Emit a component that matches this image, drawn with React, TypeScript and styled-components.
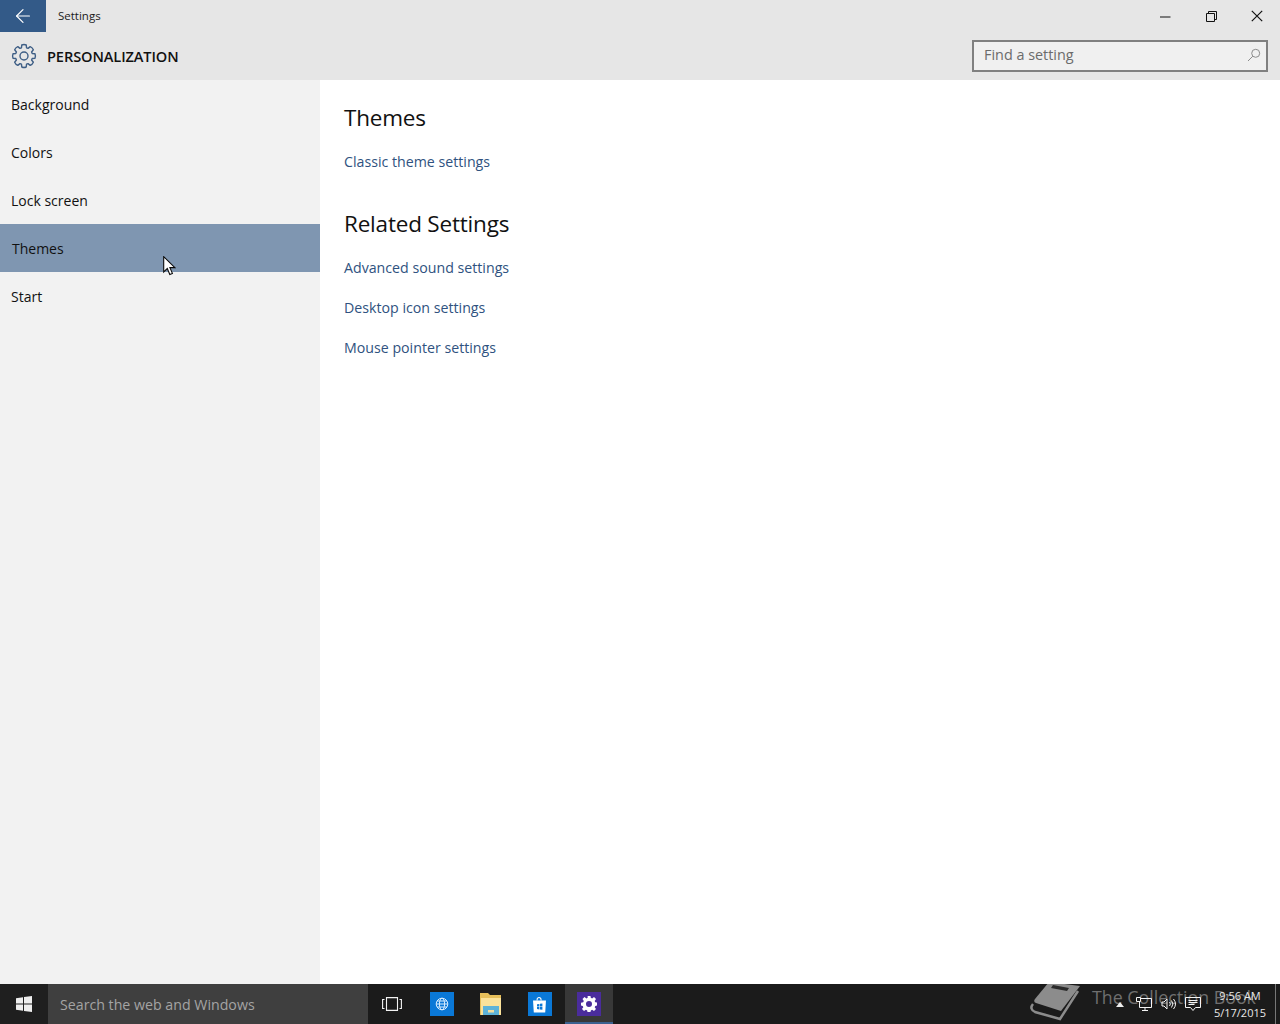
import React from "react";
import styled, { createGlobalStyle } from "styled-components";
import { ArrowLeft } from "lucide-react";

const Global = createGlobalStyle`
  html, body { margin: 0; padding: 0; width: 1280px; height: 1024px; overflow: hidden; background: #fff; }
  * { box-sizing: border-box; }
  body { font-family: "Open Sans", "Noto Sans", sans-serif; }
`;
const Page = styled.div`display:flex;flex-direction:column;width:1280px;height:1024px;`;
const Window = styled.div`flex:1;display:flex;flex-direction:column;min-height:0;`;
const TitleBar = styled.div`height:32px;background:#e6e6e6;display:flex;align-items:center;`;
const BackButton = styled.div`width:46px;height:32px;background:#335a88;color:#fff;display:flex;align-items:center;justify-content:center;padding-right:1px;`;
const WindowTitle = styled.div`margin-left:12px;padding-bottom:2px;font-size:11.5px;color:#1a1a1a;flex:1;`;
const Caption = styled.div`width:46px;height:32px;display:flex;align-items:center;justify-content:center;color:#111;`;
const Header = styled.div`height:48px;background:#e6e6e6;display:flex;align-items:center;padding:0 12px 0 11px;`;
const HeaderTitle = styled.div`margin-left:10px;font-size:14.6px;font-weight:600;color:#111;flex:1;letter-spacing:-0.1px;`;
const SearchBox = styled.div`width:296px;height:32px;border:2px solid #808080;background:#f0f0f0;display:flex;align-items:center;justify-content:space-between;padding:0 5px 3px 10px;font-size:14.4px;color:#6b6b6b;`;
const Body = styled.div`flex:1;display:flex;min-height:0;`;
const Sidebar = styled.nav`width:320px;background:#f2f2f2;display:flex;flex-direction:column;`;
const NavItem = styled.div<{ $active?: boolean }>`
  height:48px;display:flex;align-items:center;padding-left:${p => p.$active ? 12 : 11}px;font-size:14px;color:#111;
  background:${p => p.$active ? "#7f96b1" : "transparent"};position:relative;
`;
const Cursor = styled.svg`position:absolute;left:163px;top:32px;`;
const Content = styled.main`flex:1;background:#fff;padding:23px 24px 0;`;
const H2 = styled.h2`margin:0;font-size:22.5px;line-height:30px;font-weight:400;color:#111;letter-spacing:-0.2px;`;
const Links = styled.div<{ $last?: boolean }>`display:flex;flex-direction:column;gap:20px;margin:19px 0 ${p => p.$last ? 0 : 37}px;`;
const LinkText = styled.a`font-size:14.2px;line-height:20px;color:#2f5280;`;
const Taskbar = styled.footer`height:40px;background:#1b1b1b;display:flex;align-items:stretch;position:relative;overflow:hidden;color:#fff;`;
const StartButton = styled.div`width:48px;display:flex;align-items:center;justify-content:center;background:#1f1f1f;`;
const SearchBar = styled.div`width:320px;background:#3f3f3f;color:#a4a4a4;display:flex;align-items:center;padding-left:12px;font-size:14.2px;`;
const TaskIcon = styled.div<{ $w?: number; $active?: boolean }>`
  width:${p => p.$w ?? 49}px;display:flex;align-items:center;justify-content:center;
  ${p => p.$active ? "background:#383838;border-bottom:2px solid #3b618f;padding-top:2px;" : ""}
`;
const Tile = styled.div<{ $bg: string }>`width:24px;height:24px;background:${p => p.$bg};display:flex;align-items:center;justify-content:center;`;
const Spacer = styled.div`flex:1;`;
const Tray = styled.div`display:flex;align-items:center;margin-right:8px;position:relative;`;
const TrayIcon = styled.div<{ $w: number }>`width:${p => p.$w}px;display:flex;justify-content:center;align-items:center;`;
const Clock = styled.div`width:54px;margin-left:8px;text-align:center;font-size:11px;line-height:17px;color:#e8e8e8;white-space:nowrap;`;
const ShowDesktop = styled.div`width:1px;background:#777;margin-right:4px;`;
const Watermark = styled.div`position:absolute;left:1025px;top:-2px;height:42px;display:flex;align-items:flex-start;gap:7px;white-space:nowrap;`;
const WatermarkText = styled.span`color:#6f6f6f;font-size:17.8px;line-height:30px;`;

const gearPath = (() => {
  const teeth = 8, cx = 12, cy = 12, pts: string[] = [];
  for (let i = 0; i < teeth; i++) {
    const step = (Math.PI * 2) / teeth, a = i * step - Math.PI / 2;
    const at = (r: number, o: number) => `${(cx + r * Math.cos(a + o)).toFixed(2)} ${(cy + r * Math.sin(a + o)).toFixed(2)}`;
    pts.push(`${i ? "L" : "M"}${at(8.6, -0.27 * step * 1.4)}L${at(11.2, -0.2)}Q${at(11.9, 0)} ${at(11.2, 0.2)}L${at(8.6, 0.27 * step * 1.4)}`);
  }
  return pts.join("") + "Z";
})();

const Gear = () => (
  <svg width="26" height="26" viewBox="-1 -1 26 26" fill="none" stroke="#3f5f86" strokeWidth="1.4" strokeLinejoin="round">
    <path d={gearPath} />
    <circle cx="12" cy="12" r="4" />
  </svg>
);

export default function App() {
  return (
    <Page>
      <Global />
      <Window>
        <TitleBar>
          <BackButton><ArrowLeft size={22} strokeWidth={1.3} /></BackButton>
          <WindowTitle>Settings</WindowTitle>
          <Caption><svg width="11" height="11" viewBox="0 0 11 11"><path d="M0 6h10.500" stroke="#111" /></svg></Caption>
          <Caption><svg width="11" height="11" viewBox="0 0 11 11" fill="none" stroke="#111"><path d="M.5 2.500h8v8h-8zM2.500 2.500v-2h8v8h-2" /></svg></Caption>
          <Caption><svg width="12" height="12" viewBox="0 0 12 12" stroke="#111" strokeWidth="1.2"><path d="M.8.8l10.400 10.400M11.200.8L.8 11.200" /></svg></Caption>
        </TitleBar>
        <Header>
          <Gear />
          <HeaderTitle>PERSONALIZATION</HeaderTitle>
          <SearchBox>
            Find a setting
            <svg width="14" height="14" viewBox="0 0 14 14" fill="none" stroke="#8c8c8c"><circle cx="8.700" cy="5.300" r="4" /><path d="M5.800 8.200L1 13" /></svg>
          </SearchBox>
        </Header>
        <Body>
          <Sidebar>
            <NavItem>Background</NavItem>
            <NavItem>Colors</NavItem>
            <NavItem>Lock screen</NavItem>
            <NavItem $active>
              Themes
              <Cursor width="13" height="20" viewBox="0 0 13 20"><path d="M.7.7v15.200l3.600-3.400 2.500 6 2.600-1.100-2.500-5.800h5z" fill="#fff" stroke="#0a0a0a" strokeWidth="1.100" /></Cursor>
            </NavItem>
            <NavItem>Start</NavItem>
          </Sidebar>
          <Content>
            <H2>Themes</H2>
            <Links><LinkText>Classic theme settings</LinkText></Links>
            <H2>Related Settings</H2>
            <Links $last>
              <LinkText>Advanced sound settings</LinkText>
              <LinkText>Desktop icon settings</LinkText>
              <LinkText>Mouse pointer settings</LinkText>
            </Links>
          </Content>
        </Body>
      </Window>
      <Taskbar>
        <Watermark>
          <svg width="60" height="42" viewBox="0 0 60 42">
            <path d="M24 0L55 4L36 29L11 21Q8 20 10 17Z" fill="#8c8c8c" />
            <path d="M28 3L44 6L42 9L26 6Z" fill="#2a2a2a" />
            <path d="M53 9L35 37L10 30Q4 27 8 22" fill="none" stroke="#8c8c8c" strokeWidth="2.500" />
          </svg>
          <WatermarkText>The Collection Book</WatermarkText>
        </Watermark>
        <StartButton>
          <svg width="16" height="16" viewBox="0 0 16 16" fill="#eee"><path d="M0 2.300l7-1v6.300H0zM8 1.100L16 0v7.600H8zM0 8.500h7v6.200l-7-1zM8 8.500h8V16l-8-1.100z" /></svg>
        </StartButton>
        <SearchBar>Search the web and Windows</SearchBar>
        <TaskIcon $w={48}>
          <svg width="20" height="14" viewBox="0 0 20 14" fill="none" stroke="#f2f2f2" strokeWidth="1.100"><path d="M4.500.6h11v12.800h-11zM2.500 2.500H.6v9h1.900M17.500 2.500h1.900v9h-1.900" /></svg>
        </TaskIcon>
        <TaskIcon $w={52}>
          <Tile $bg="#0a78d7"><svg width="14" height="14" viewBox="0 0 14 14" fill="none" stroke="#d7ecff" strokeWidth="1"><circle cx="7" cy="7" r="5.800" /><ellipse cx="7" cy="7" rx="2.600" ry="5.800" /><path d="M1.200 7h11.600M2 4h10M2 10h10" /></svg></Tile>
        </TaskIcon>
        <TaskIcon $w={46}>
          <svg width="22" height="22" viewBox="0 0 22 22"><path d="M0 0h8l2 2h11v20H0z" fill="#e6bf5a" /><path d="M1 5h20v17H1z" fill="#fbe29a" /><path d="M3 13h16v9H3z" fill="#5eb3d8" /><path d="M8 17h6v2.500H8z" fill="#f3dfa0" /></svg>
        </TaskIcon>
        <TaskIcon $w={51}>
          <Tile $bg="#0a78d7"><svg width="15" height="17" viewBox="0 0 15 17"><path d="M5 4.500L5.300 2.500Q7 .6 8.800 2.500L9.200 4.500" fill="none" stroke="#fff" strokeWidth="1.100" /><path d="M1 4.500h13l-.8 12H1.800z" fill="#fff" /><path d="M5 8.200l2.400-.3v2.500H5zM8 7.800l2.400-.3v2.900H8zM5 11h2.400v2.400L5 13.100zM8 11h2.400v2.700L8 13.400z" fill="#0a78d7" /></svg></Tile>
        </TaskIcon>
        <TaskIcon $w={48} $active>
          <Tile $bg="#4a2c9c"><svg width="16" height="16" viewBox="0 0 16 16"><path fillRule="evenodd" fill="#fff" d="M6.600 0h2.800l.4 2.200 1.300.6 1.900-1.300 2 2-1.300 1.900.6 1.300 2.200.4v2.800l-2.200.4-.6 1.300 1.300 1.900-2 2-1.900-1.300-1.300.6-.4 2.200H6.600l-.4-2.200-1.300-.6L3 15.500l-2-2 1.300-1.900-.6-1.300L0 9.900V7.100l2.200-.4.6-1.300L1.500 3.500l2-2 1.900 1.300 1.300-.6zM8 5.300a3 3 0 100 6 3 3 0 000-6z" transform="translate(0 -.4)" /></svg></Tile>
        </TaskIcon>
        <Spacer />
        <Tray>
          <TrayIcon $w={24}><svg width="8" height="5" viewBox="0 0 8 5" fill="#eee"><path d="M4 0l4 5H0z" /></svg></TrayIcon>
          <TrayIcon $w={24}><svg width="16" height="16" viewBox="0 0 16 16" fill="none" stroke="#f4f4f4"><path d="M3.500 2.500h12v9h-12zM9 11.500v3M6 14.500h6" /><path d="M.5 1.500h4v4h-4z" fill="#1b1b1b" /></svg></TrayIcon>
          <TrayIcon $w={25}><svg width="16" height="14" viewBox="0 0 16 14" fill="none" stroke="#f4f4f4"><path d="M1 5h2l3-3v10L3 9H1zM8.500 5a3 3 0 010 4M10.500 3.500a5.500 5.500 0 010 7M12.500 2a8 8 0 010 10" /></svg></TrayIcon>
          <TrayIcon $w={24}><svg width="16" height="16" viewBox="0 0 16 16" fill="none" stroke="#f4f4f4"><path d="M.5 1.500h15v10h-5l-2.500 3-2.500-3h-5zM3.500 4.500h9M3.500 6.500h9M3.500 8.500h6" /></svg></TrayIcon>
          <Clock>9:56 AM<br />5/17/2015</Clock>
        </Tray>
        <ShowDesktop />
      </Taskbar>
    </Page>
  );
}
